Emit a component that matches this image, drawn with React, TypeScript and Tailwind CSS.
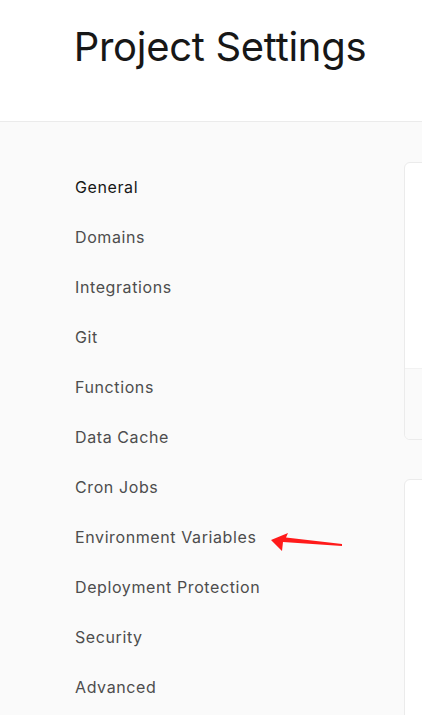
const navItems = [
  "General",
  "Domains",
  "Integrations",
  "Git",
  "Functions",
  "Data Cache",
  "Cron Jobs",
  "Environment Variables",
  "Deployment Protection",
  "Security",
  "Advanced",
];

export default function App() {
  return (
    <div
      className="w-[422px] h-[715px] overflow-hidden bg-[#fafafa]"
      style={{ fontFamily: "Inter, 'Noto Sans', sans-serif" }}
    >
      <header className="h-[122px] bg-white border-b border-[#ebebeb] flex items-center justify-center pl-[18px]">
        <h1 className="text-[40px] leading-none tracking-[-0.3px] text-[#171717] pb-[28px]">
          Project Settings
        </h1>
      </header>

      <div className="flex pt-[40px] pl-[75px]">
        <nav className="w-[329px] shrink-0 flex flex-col">
          {navItems.map((item, i) => (
            <div key={item} className="h-[50px] flex items-center">
              <span
                className={`text-[16px] tracking-[0.6px] ${
                  i === 0 ? "text-[#171717]" : "text-[#4d4d4d]"
                }`}
              >
                {item}
              </span>
              {item === "Environment Variables" && (
                <svg
                  width="80"
                  height="24"
                  viewBox="0 0 80 24"
                  className="ml-[14px] mt-[16px]"
                >
                  <polygon
                    points="1,7 18,0 16,4.5 72,11 72,13 13,9 12,18"
                    fill="#ff1a1a"
                  />
                </svg>
              )}
            </div>
          ))}
        </nav>

        <main className="flex flex-col gap-[39px] shrink-0 w-[600px]">
          <div className="h-[278px] bg-white border border-[#ebebeb] rounded-[6px] flex flex-col overflow-hidden">
            <div className="flex-1" />
            <div className="h-[71px] bg-[#fafafa] border-t border-[#f2f2f2]" />
          </div>
          <div className="h-[400px] bg-white border border-[#ebebeb] rounded-[6px]" />
        </main>
      </div>
    </div>
  );
}
